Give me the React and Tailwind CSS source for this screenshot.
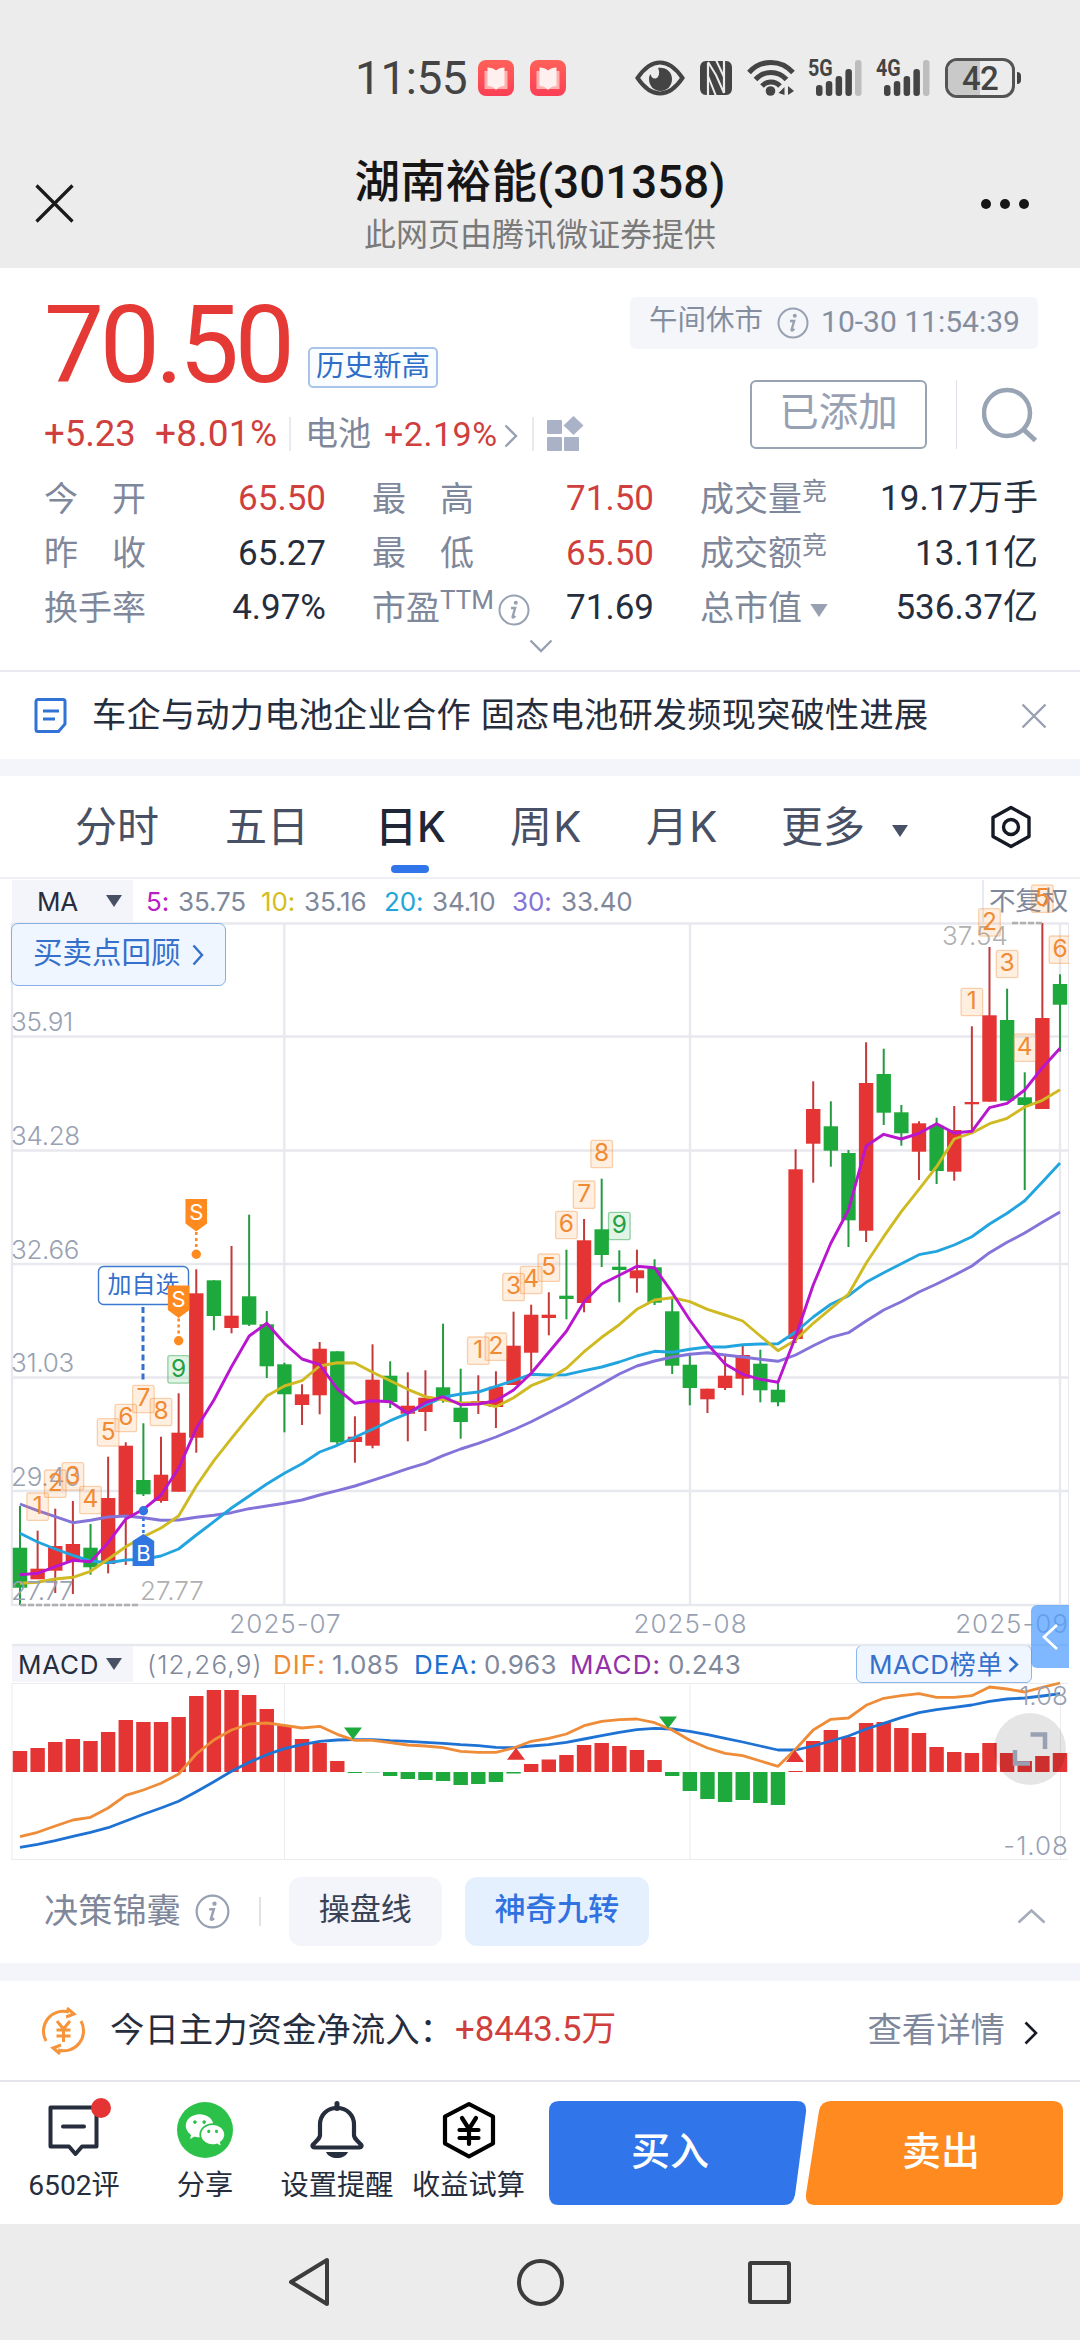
import React from 'react';
import { RiWechatFill } from 'react-icons/ri';

const RED = '#e53434';
const GREEN = '#1ea93c';

// trend, body top, body bottom, high, low
const candles = [
  ['g', 1547.7, 1587.7, 1506, 1605],
  ['r', 1568.7, 1579.3, 1530.7, 1579],
  ['r', 1546, 1570.7, 1508.7, 1593],
  ['r', 1544, 1561.7, 1501, 1594],
  ['g', 1547.7, 1567.3, 1524, 1574.7],
  ['r', 1498, 1564, 1456.7, 1573.3],
  ['r', 1445.7, 1515, 1442.3, 1565],
  ['g', 1480, 1494.3, 1423.3, 1496],
  ['r', 1474.7, 1501, 1436.7, 1502.7],
  ['r', 1432.7, 1491.7, 1393.3, 1491.7],
  ['r', 1293.3, 1437.7, 1269.3, 1452.7],
  ['g', 1280.3, 1316, 1280.3, 1330.3],
  ['r', 1315.7, 1328, 1246, 1333.3],
  ['g', 1296.3, 1324.7, 1214.7, 1326],
  ['g', 1324.3, 1366.3, 1311, 1378],
  ['g', 1364.3, 1394.3, 1362.7, 1432.3],
  ['r', 1394.3, 1405, 1384.3, 1425],
  ['r', 1348.7, 1395.3, 1342, 1414.3],
  ['g', 1351.3, 1442.3, 1351.3, 1445],
  ['r', 1436.7, 1442, 1416.3, 1462.7],
  ['r', 1379.7, 1445.7, 1344.3, 1448.3],
  ['g', 1375.7, 1402, 1361.3, 1408],
  ['r', 1405.7, 1413.7, 1372.3, 1441.3],
  ['r', 1397.7, 1412, 1370.3, 1431],
  ['g', 1387.3, 1400, 1323.7, 1402.7],
  ['g', 1407.7, 1422, 1368.7, 1438.7],
  ['r', 1401, 1404.7, 1375.3, 1414],
  ['r', 1386.7, 1407, 1371.3, 1428],
  ['r', 1345.7, 1385, 1311.7, 1385],
  ['r', 1314.7, 1352.7, 1304.7, 1371.7],
  ['r', 1314.7, 1318, 1292.3, 1335.3],
  ['g', 1295.7, 1299, 1249.7, 1319.3],
  ['r', 1240.3, 1303, 1219, 1312.3],
  ['g', 1229.3, 1255, 1178.7, 1267],
  ['g', 1266.7, 1270, 1250.3, 1302.3],
  ['r', 1270.3, 1278.3, 1249.7, 1292.7],
  ['g', 1267.3, 1302.7, 1259.3, 1305],
  ['g', 1311.3, 1365.7, 1296.7, 1374],
  ['g', 1364.7, 1388, 1355, 1405.3],
  ['r', 1388.7, 1399.3, 1388.7, 1413],
  ['r', 1375.7, 1388, 1355.7, 1390],
  ['r', 1355, 1378.7, 1345.3, 1395.3],
  ['g', 1363.7, 1390.3, 1349.7, 1402.3],
  ['g', 1389.7, 1402.3, 1382.7, 1406.3],
  ['r', 1169.3, 1339, 1149.3, 1343],
  ['r', 1109, 1143.7, 1081.3, 1182.7],
  ['g', 1126.3, 1150.7, 1101.3, 1166.7],
  ['g', 1153, 1220.3, 1150, 1247],
  ['r', 1083, 1230.7, 1042.3, 1242],
  ['g', 1074, 1112.7, 1048.7, 1125],
  ['g', 1112.3, 1133.3, 1105, 1145.7],
  ['r', 1123.3, 1151.7, 1121.3, 1180],
  ['g', 1125.7, 1171, 1117.7, 1184],
  ['r', 1130, 1171.7, 1106, 1180.7],
  ['r', 1102, 1104.3, 1026.3, 1132.3],
  ['r', 1015.3, 1101.7, 947, 1101.7],
  ['g', 1020, 1100.7, 988.7, 1100.7],
  ['g', 1097.3, 1105, 1072.3, 1190],
  ['r', 1018, 1109, 923, 1109],
  ['g', 984, 1004.7, 974.3, 1051.7],
];

const ma5 = [
  1574.7, 1573.3, 1566.7, 1560.3, 1561.7, 1542.7, 1519, 1509.3, 1495, 1468.3, 1428.3, 1400, 1366.7, 1336, 1323.3,
  1343.3, 1359, 1364.7, 1389, 1403.3, 1400.7, 1401.7, 1413.3, 1402.7, 1396.7, 1404.7, 1404, 1400.7, 1390, 1373.3,
  1352.3, 1331.3, 1301.7, 1284, 1275.3, 1266.3, 1267.7, 1292.7, 1320, 1344, 1364, 1374.3, 1379.3, 1382.3, 1336.7,
  1285, 1243.3, 1210, 1146, 1134.3, 1139, 1133.3, 1123.7, 1133, 1131.3, 1107.7, 1103.3, 1090, 1067.7, 1048.3,
];
const ma10 = [
  1583.3, 1582.3, 1579, 1577.3, 1571.3, 1559.3, 1546.7, 1536.7, 1528, 1516, 1486, 1460.7, 1438.3, 1416.7, 1396,
  1386, 1380.7, 1366, 1362.7, 1363, 1372.3, 1380.7, 1389.3, 1396.7, 1399.7, 1403, 1402.7, 1406.7, 1397.7, 1385.7,
  1378.7, 1368.3, 1351.7, 1337.3, 1324.7, 1309.3, 1300, 1297.7, 1301.7, 1309.3, 1315, 1321, 1336, 1350.7, 1340,
  1323.3, 1308.7, 1294, 1263.3, 1236.7, 1211.7, 1189.3, 1166.7, 1139, 1133, 1123.7, 1118.3, 1107, 1100.3, 1089.7,
];
const ma20 = [
  1533.3, 1542, 1549, 1555.3, 1561, 1562.7, 1560, 1559.3, 1556, 1549, 1535, 1521.7, 1508, 1496, 1484,
  1473.3, 1463.7, 1452, 1445.3, 1437.3, 1429.3, 1420.7, 1413.3, 1405, 1397.3, 1394, 1392, 1386.3, 1380.7, 1374.3,
  1375, 1374.7, 1370.7, 1367, 1362, 1356, 1351.3, 1352.3, 1349.3, 1347, 1347, 1344.7, 1344, 1343.7, 1332,
  1317, 1304.3, 1295.7, 1282.3, 1272.7, 1263.7, 1254.7, 1251.3, 1245, 1236.7, 1224, 1213.3, 1200.7, 1182, 1163,
];
const ma30 = [
  1504, 1510.7, 1516.7, 1522.7, 1520.3, 1517, 1516, 1517.7, 1520.3, 1520, 1517.3, 1515.3, 1512.7, 1508.7, 1506,
  1503.3, 1500, 1495, 1490.7, 1486, 1480.3, 1474.7, 1468.7, 1463.3, 1455.7, 1449, 1443.3, 1437, 1429.7, 1421.7,
  1412.7, 1403.7, 1393.7, 1384, 1374, 1366, 1361, 1357, 1354.3, 1352.7, 1355, 1357, 1359.3, 1361.3, 1355,
  1345.7, 1337.3, 1332.7, 1321, 1310, 1301.7, 1292, 1284, 1275.3, 1266, 1252.7, 1242.3, 1233, 1222.3, 1212,
];

// candle index, number, top
const turns = [
  [1, 1, 1493], [2, 2, 1470], [3, 3, 1462.7], [4, 4, 1486.3], [5, 5, 1418.7], [6, 6, 1404.3], [7, 7, 1385.3],
  [8, 8, 1398.3], [9, 9, 1355.7],
  [26, 1, 1337], [27, 2, 1333], [28, 3, 1273.3], [29, 4, 1266.3], [30, 5, 1254], [31, 6, 1211.3], [32, 7, 1181],
  [33, 8, 1140.3], [34, 9, 1212.3],
  [54, 1, 988.3], [55, 2, 908.7], [56, 3, 950.3], [57, 4, 1034], [58, 5, 885], [59, 6, 936],
];

const macdBars = [
  21, 24, 30, 33, 31, 40, 52, 50, 50, 55, 76, 82, 82, 77, 63, 46, 33, 29, 11, -1, -0.4, -4, -7, -8, -9, -13, -12, -10,
  -1.5, 8, 12.5, 17, 27, 29, 26, 22, 12, -4, -19, -27, -30, -28, -31, -33, 1, 31, 42, 35, 49, 50, 44, 39, 25, 20, 19,
  29, 19, 11, 16, 19,
];
const dif = [
  710, 697, 678, 660, 652, 624, 586, 570, 550, 522, 462, 420, 390, 372, 369, 376, 384, 379, 403, 421, 421, 428, 435,
  438, 443, 454, 457, 457, 444, 424, 415, 402, 377, 364, 359, 357, 368, 390, 421, 444, 460, 467, 483, 499, 448, 390,
  358, 354, 316, 295, 287, 281, 292, 292, 287, 261, 267, 276, 262, 249,
];
const dea = [
  742, 733, 722, 709, 697, 683, 663, 643, 624, 604, 575, 545, 514, 487, 464, 446, 434, 424, 420, 419, 419, 422, 424,
  427, 430, 434, 437, 442, 443, 438, 434, 427, 417, 407, 397, 389, 385, 387, 394, 404, 415, 426, 438, 450, 450, 438,
  423, 408, 387, 370, 353, 338, 329, 322, 315, 304, 297, 294, 288, 281,
];

const xAt = (i) => 20 + i * 17.627;
const points = (values) => values.map((v, i) => `${xAt(i).toFixed(1)},${v}`).join(' ');
const macdPoints = (values) => values.map((v, i) => `${xAt(i).toFixed(1)},${(1600 + v / 3).toFixed(1)}`).join(' ');

function InfoIcon({ size = 32 }) {
  return (
    <svg width={size} height={size} viewBox="0 0 32 32" fill="none" className="shrink-0">
      <circle cx="16" cy="16" r="14.5" stroke="#98a1b2" strokeWidth="2" />
      <circle cx="17.8" cy="8.8" r="2" fill="#98a1b2" />
      <path d="M13 14h4.2l-2.6 8.6c-.3 1.2.8 1.4 2.8-.6" stroke="#98a1b2" strokeWidth="2.3" />
    </svg>
  );
}

function Caret({ className, width = 16, height = 12 }) {
  return (
    <svg width={width} height={height} viewBox="0 0 16 12" className={className}>
      <path d="M0 0h16L8 12z" fill="currentColor" />
    </svg>
  );
}

function Chevron({ className, width = 12, height = 22, stroke = 2.4 }) {
  return (
    <svg width={width} height={height} viewBox={`0 0 ${width} ${height}`} fill="none" className={className}>
      <path
        d={`M1.5 1.5L${width - 2} ${height / 2}L1.5 ${height - 1.5}`}
        stroke="currentColor"
        strokeWidth={stroke}
      />
    </svg>
  );
}

function BookIcon() {
  return (
    <svg width="36" height="36" viewBox="0 0 36 36">
      <defs>
        <linearGradient id="book" x1="0" y1="0" x2="0" y2="1">
          <stop offset="0" stopColor="#ff6159" />
          <stop offset="1" stopColor="#fb3f55" />
        </linearGradient>
      </defs>
      <rect width="36" height="36" rx="8" fill="url(#book)" />
      <path d="M6.500 11h23v18h-23z" fill="#ffb0ad" />
      <path d="M9.500 7.500c3.500 0 6.500 1 8.500 3 2-2 5-3 8.500-3V26c-3.500 0-6.500 1.500-8.500 4-2-2.500-5-4-8.500-4z" fill="#fff0f0" />
    </svg>
  );
}

function Signal({ label }) {
  return (
    <div className="relative h-[38px] w-[54px]">
      <span className="absolute -top-px left-0 origin-left scale-x-[0.82] text-[24px] leading-[20px] font-bold">{label}</span>
      <svg width="46" height="38" viewBox="0 0 46 38" className="absolute top-0 left-2" fill="#444">
        <rect x="0" y="26" width="6.500" height="11" rx="3" />
        <rect x="9.800" y="22" width="6.500" height="15" rx="3" />
        <rect x="19.600" y="17" width="6.500" height="20" rx="3" />
        <rect x="29.400" y="10" width="6.500" height="27" rx="3" />
        <rect x="39" y="1" width="6.500" height="36" rx="3" fill="#bdbdbd" />
      </svg>
    </div>
  );
}

function StatusBar() {
  return (
    <div className="flex h-[156px] items-center pl-[355px] font-['Roboto'] text-[#444]">
      <span className="w-[123px] text-[46px] leading-none tracking-[-0.01em]">11:55</span>
      <BookIcon />
      <div className="w-4" />
      <BookIcon />
      <svg width="50" height="36" viewBox="0 0 50 36" className="ml-[69px]" fill="none">
        <path d="M2.500 18C10 7 17 2.500 25 2.500S40 7 47.500 18C40 29 33 33.500 25 33.500S10 29 2.500 18z" stroke="#444" strokeWidth="4" />
        <path d="M23 8c8-1 14 4 14 11s-5 12-11.500 12S14 26 14 19c0-2 .5-3.500 1.500-5 .5 3 2.500 5 5 4.500 4-1 4.500-7 2.500-10.500z" fill="#444" />
      </svg>
      <svg width="34" height="36" viewBox="0 0 34 36" className="ml-[14px]">
        <path d="M7 1h20c4 0 6 3 6 7v20c0 4-2 7-6 7H7c-4 0-6-3-6-7V8c0-4 2-7 6-7z" fill="#444" />
        <path d="M9 35V3M25 1v32" stroke="#ececec" strokeWidth="2.200" fill="none" />
        <path d="M9 2l8 13 8 18M9 16l8 20M17 0l8 17" stroke="#ececec" strokeWidth="2" fill="none" />
      </svg>
      <svg width="48" height="38" viewBox="0 0 48 38" className="ml-[14px]" fill="none" stroke="#444" strokeWidth="5">
        <path d="M2 13.500C14 0 34 0 46 13.500" />
        <path d="M8.500 20.500C17 11 31 11 39.500 20.500" />
        <path d="M15 27C20 21.500 28 21.500 33 27" />
        <circle cx="23.500" cy="32" r="4.800" fill="#444" stroke="none" />
        <path d="M31.500 34l6-6v8zM47 32l-6-5v9z" fill="#444" stroke="none" />
      </svg>
      <div className="ml-[13px]"><Signal label="5G" /></div>
      <div className="ml-[14px]"><Signal label="4G" /></div>
      <div className="relative ml-[15px] flex h-10 w-[70px] items-center justify-center overflow-hidden rounded-[12px] border-[3px] border-[#555]">
        <div className="absolute inset-y-0 left-0 w-1/2 bg-[#c9c9c9]" />
        <span className="relative text-[33px] leading-none font-medium tracking-[-0.02em]">42</span>
      </div>
      <div className="ml-[2px] h-3 w-1 rounded-r bg-[#444]" />
    </div>
  );
}

function TitleBar() {
  return (
    <div className="flex h-[112px] items-start justify-between px-[35px]">
      <div className="w-[80px]">
        <svg width="39" height="39" viewBox="0 0 39 39" className="mt-7" stroke="#1a1a1a" strokeWidth="3.200">
          <path d="M1.500 1.500l36 36M37.500 1.500l-36 36" />
        </svg>
      </div>
      <div className="text-center">
        <h1 className="mt-px font-['Roboto','Noto_Sans_CJK_SC',sans-serif] text-[45.500px] leading-[52px] font-medium tracking-[0.004em] text-[#161616]">湖南裕能(301358)</h1>
        <p className="mt-[4px] text-[32px] leading-[44px] text-[#7a7a7a]">此网页由腾讯微证券提供</p>
      </div>
      <div className="flex w-[80px] justify-end pr-[15px]">
        <svg width="50" height="12" viewBox="0 0 50 12" className="mt-[42px]" fill="#161616">
          <circle cx="6" cy="6" r="5" />
          <circle cx="25" cy="6" r="5" />
          <circle cx="44" cy="6" r="5" />
        </svg>
      </div>
    </div>
  );
}

function Metric({ label, spread, extra, value, up }) {
  return (
    <div className="flex h-[54.500px] items-center justify-between">
      <div className="flex items-center text-[34px] text-[#7f889b]">
        {spread ? (
          <span className="flex w-[102px] justify-between">
            <span>{label[0]}</span>
            <span>{label[1]}</span>
          </span>
        ) : (
          <span>{label}</span>
        )}
        {extra}
      </div>
      <span className={up ? 'text-[35px] text-[#cf3f3d]' : 'text-[35px] text-[#262d3d]'}>{value}</span>
    </div>
  );
}

function Quote() {
  const jing = <span className="-mt-4 text-[25px]">竞</span>;
  return (
    <section className="h-[402px] bg-white pt-[29px] pr-[42px] pl-[44px] font-['Roboto','Noto_Sans_CJK_SC',sans-serif]">
      <div className="flex h-[158px] justify-between">
        <div>
          <div className="flex h-[98px] items-end">
            <span className="w-[264px] text-[107px] leading-[98px] tracking-[-0.042em] text-[#e53935]">70.50</span>
            <span className="mb-[7px] flex h-[41px] w-[130px] items-center justify-center rounded-[5px] border-2 border-[#a9c4e8] bg-[#fafdff] text-[28.500px] text-[#2f6fc9]">
              历史新高
            </span>
          </div>
          <div className="mt-[17px] flex h-[44px] items-center whitespace-nowrap">
            <span className="w-[111px] text-[36.500px] text-[#cf3f3d]">+5.23</span>
            <span className="w-[134px] text-[37px] tracking-[0.01em] text-[#cf3f3d]">+8.01%</span>
            <span className="mr-[14px] h-[34px] w-[2px] bg-[#e8eaf0]" />
            <span className="w-[79px] text-[33px] text-[#7f889b]">电池</span>
            <span className="w-[120px] text-[34px] tracking-[0.015em] text-[#cf3f3d]">+2.19%</span>
            <Chevron className="mt-1 text-[#98a1b2]" width={14} height={24} />
            <span className="mr-[13px] ml-[14px] h-[34px] w-[2px] bg-[#e8eaf0]" />
            <svg width="38" height="36" viewBox="0 0 38 36" fill="#a9b2c6">
              <rect x="0" y="4" width="15" height="14" rx="1" />
              <path d="M26.500 0l10 9.500-10 9.500-10-9.500z" />
              <rect x="0" y="21" width="15" height="14" rx="1" />
              <rect x="17" y="21" width="15" height="14" rx="1" />
            </svg>
          </div>
        </div>
        <div className="flex flex-col items-end">
          <div className="flex h-[52px] w-[408px] items-center rounded-[6px] bg-[#f4f6fa] pl-[19px] text-[30px] text-[#858e9f]">
            <span className="mr-[14px] -mt-[3px] text-[28.500px]">午间休市</span>
            <InfoIcon />
            <span className="-mt-[3px] ml-[12px]">10-30 11:54:39</span>
          </div>
          <div className="mt-[31px] flex h-[69px] items-center">
            <div className="flex h-[69px] w-[177px] items-center justify-center rounded-[6px] border-2 border-[#98a3b4] pb-1 text-[39.500px] text-[#98a1b2]">
              已添加
            </div>
            <div className="ml-[29px] h-[69px] w-px bg-[#dfe2e9]" />
            <svg width="56" height="56" viewBox="0 0 56 56" className="ml-[25px]" fill="none" stroke="#98a3b4" strokeWidth="4.500">
              <circle cx="25" cy="26" r="23" />
              <path d="M41 42l12.500 11.500" strokeWidth="5" />
            </svg>
          </div>
        </div>
      </div>
      <div className="mt-[17px] grid grid-cols-[282px_282px_338px] gap-x-[46px]">
        <Metric label="今开" spread value="65.50" up />
        <Metric label="最高" spread value="71.50" up />
        <Metric label="成交量" extra={jing} value="19.17万手" />
        <Metric label="昨收" spread value="65.27" />
        <Metric label="最低" spread value="65.50" up />
        <Metric label="成交额" extra={jing} value="13.11亿" />
        <Metric label="换手率" value="4.97%" />
        <Metric
          label="市盈"
          value="71.69"
          extra={
            <>
              <span className="-mt-4 mr-1 text-[26px]">TTM</span>
              <div className="pt-1"><InfoIcon /></div>
            </>
          }
        />
        <Metric label="总市值" value="536.37亿" extra={<Caret width={18} height={13} className="mt-1 ml-2 text-[#98a1b2]" />} />
      </div>
      <svg width="24" height="14" viewBox="0 0 24 14" className="mx-auto mt-[3px]" fill="none" stroke="#98a1b2" strokeWidth="2.400">
        <path d="M1.500 1.500L12 12L22.500 1.500" />
      </svg>
    </section>
  );
}

function News() {
  return (
    <div className="flex h-[89px] items-center border-t-2 border-[#e8e9f1] bg-white pr-[33px] pl-[34px]">
      <svg width="33" height="35" viewBox="0 0 33 35" fill="none" stroke="#3072d6" strokeWidth="3">
        <path d="M4 1.500h25a2 2 0 0 1 2 2V26l-6.500 7.500H4a2 2 0 0 1-2-2v-28a2 2 0 0 1 2-2z" />
        <path d="M9 13h16M9 21h12" />
      </svg>
      <span className="-mt-[2px] ml-[25px] text-[34.200px] tracking-[0.25px] text-[#262d3d]">车企与动力电池企业合作 固态电池研发频现突破性进展</span>
      <svg width="26" height="26" viewBox="0 0 26 26" className="ml-auto" stroke="#98a1b2" strokeWidth="2.400">
        <path d="M1.500 1.500l23 23M24.500 1.500l-23 23" />
      </svg>
    </div>
  );
}

function Tabs() {
  return (
    <div className="flex h-[103px] items-center border-b-2 border-[#eff0f4] bg-white pl-[75px] text-[42px] text-[#475064]">
      <span className="w-[150px]">分时</span>
      <span className="w-[150px]">五日</span>
      <span className="relative flex w-[135px] font-medium text-[#1f2636]">
        日K
        <span className="absolute top-[70px] left-[16px] h-[8px] w-[38px] rounded-full bg-[#3076ea]" />
      </span>
      <span className="w-[136px] tracking-[0.03em]">周K</span>
      <span className="w-[135px] tracking-[0.03em]">月K</span>
      <span className="w-[109px]">更多</span>
      <Caret className="mt-2" width={20} height={12} />
      <svg width="42" height="44" viewBox="0 0 42 44" className="ml-[80px]" fill="none" stroke="#151a24" strokeWidth="3.400">
        <path d="M21 2.500l18 10v19l-18 10-18-10v-19z" strokeLinejoin="round" />
        <circle cx="21" cy="22" r="7.500" />
      </svg>
    </div>
  );
}

function MaRow() {
  return (
    <div className="relative flex h-[42px] items-center bg-white pl-[12px] text-[26px] tracking-[-0.005em] whitespace-nowrap text-[#7f889b]">
      <div className="flex h-[42px] w-[121px] items-center bg-[#f4f5fa] pl-[25px] text-[#262d3d]">
        MA
        <Caret className="ml-auto mr-[11px] text-[#475064]" />
      </div>
      <span className="ml-[13px] w-[32px] text-[#b81ec4]">5:</span>
      <span className="w-[83px]">35.75</span>
      <span className="w-[43px] text-[#d4bd1e]">10:</span>
      <span className="w-[80px]">35.16</span>
      <span className="w-[48px] text-[#22a5d8]">20:</span>
      <span className="w-[80px]">34.10</span>
      <span className="w-[49px] text-[#8473d8]">30:</span>
      <span>33.40</span>
      <div className="ml-auto flex h-full w-[98px] items-center border-l-2 border-[#e8e9f1] pl-[5px] text-[26.500px]">
        不复权
      </div>
    </div>
  );
}

function SellFlag({ index, top }) {
  const x = xAt(index);
  return (
    <g>
      <path d={`M${x - 10.8} ${top}h21.600v24.500l-10.800 8-10.800-8z`} fill="#ff8a1f" />
      <text x={x} y={top + 21} textAnchor="middle" fontSize="22" fontWeight="400" fill="#fff">S</text>
      <line x1={x} x2={x} y1={top + 33} y2={top + 51} stroke="#ff8a1f" strokeWidth="2.600" strokeDasharray="3 3" />
      <circle cx={x} cy={top + 55.3} r="4.700" fill="#ff8a1f" />
    </g>
  );
}

function KLineChart() {
  return (
    <svg
      width="1080"
      height="723"
      viewBox="0 922 1080 723"
      className="relative block overflow-visible font-['Inter','Noto_Sans_CJK_SC',sans-serif]"
      fontSize="26"
      fontWeight="300"
    >
      <g stroke="#e8e9ee" strokeWidth="2.400">
        {[923.5, 1036.5, 1150.5, 1264, 1377.5, 1491, 1605].map((y) => (
          <line key={y} x1="12" x2="1068" y1={y} y2={y} />
        ))}
        {[12, 284.3, 690, 1060].map((x) => (
          <line key={x} x1={x} x2={x} y1="923" y2="1606" />
        ))}
        <line x1="1068.500" x2="1068.500" y1="923" y2="1606" strokeWidth="1" />
        <line x1="12" x2="1068" y1="1645" y2="1645" />
      </g>

      {candles.map(([trend, top, bottom, high, low], i) => {
        const color = trend === 'r' ? RED : GREEN;
        return (
          <g key={i} fill={color}>
            <rect x={xAt(i) - 1} y={high} width="2" height={low - high} fill={trend === 'r' ? '#c23a3a' : '#259a41'} />
            <rect x={xAt(i) - 7.2} y={top} width="14.400" height={bottom - top} />
          </g>
        );
      })}

      <g fill="none" strokeWidth="2.900" strokeLinejoin="round">
        <polyline points={points(ma30)} stroke="#8473d8" />
        <polyline points={points(ma20)} stroke="#22a5df" />
        <polyline points={points(ma10)} stroke="#cfba22" />
        <polyline points={points(ma5)} stroke="#b916cf" />
      </g>

      <g stroke="#b0b0b0" strokeWidth="2.400" strokeDasharray="6 2">
        <line x1="20" x2="140" y1="1605" y2="1605" />
        <line x1="1012" x2="1043" y1="923" y2="923" />
      </g>

      <g fill="#98a1b2">
        <g letterSpacing="-0.300">
          <text x="11" y="1031">35.91</text>
          <text x="11" y="1145">34.28</text>
          <text x="11" y="1258.500">32.66</text>
          <text x="11" y="1371.500">31.03</text>
          <text x="11" y="1485.500">29.40</text>
          <text x="11" y="1599.500">27.77</text>
        </g>
        <g letterSpacing="1">
          <text x="285.500" y="1632.500" textAnchor="middle">2025-07</text>
          <text x="690.500" y="1632.500" textAnchor="middle">2025-08</text>
          <text x="1069" y="1632.500" textAnchor="end">2025-09</text>
        </g>
      </g>
      <g fill="#b0b0b0">
        <text x="140" y="1599.500">27.77</text>
        <text x="942" y="945">37.54</text>
      </g>

      <clipPath id="plot">
        <rect x="12" y="880" width="1057" height="726" />
      </clipPath>
      <g clipPath="url(#plot)" fontWeight="500" fontSize="24.500" textAnchor="middle">
        {turns.map(([i, n, top]) => (
          <g key={i}>
            <rect
              x={xAt(i) - 10.8}
              y={top}
              width="21.600"
              height="27.400"
              rx="2"
              fill={n === 9 ? '#22b04422' : '#ff8a1f22'}
              stroke={n === 9 ? '#22a04477' : '#f0934466'}
              strokeWidth="1.300"
            />
            <text x={xAt(i)} y={top + 21} fontWeight="400" fill={n === 9 ? '#22a044' : '#f08a33'}>{n}</text>
          </g>
        ))}
      </g>

      <rect x="98.500" y="1266.500" width="90" height="38" rx="5" fill="#ffffffcc" stroke="#3b78d0" strokeWidth="1.400" />
      <text x="143.500" y="1293" textAnchor="middle" fontSize="24" fontWeight="400" fill="#3470cc">加自选</text>
      <line x1="143" x2="143" y1="1307" y2="1380" stroke="#3470cc" strokeWidth="3" strokeDasharray="6 3.500" />
      <SellFlag index={10} top={1199} />
      <SellFlag index={9} top={1285.5} />
      <circle cx="143.400" cy="1510.700" r="4.700" fill="#3076e0" />
      <line x1="143.400" x2="143.400" y1="1518" y2="1534" stroke="#3076e0" strokeWidth="2.600" strokeDasharray="3 3" />
      <path d="M143.400 1534l10.800 7v25h-21.600v-25z" fill="#3076e0" />
      <text x="143.400" y="1561" textAnchor="middle" fontSize="22" fontWeight="400" fill="#fff">B</text>
    </svg>
  );
}

function MacdRow() {
  return (
    <div className="flex h-[38px] items-center bg-white pl-[12px] text-[26px] tracking-[0.012em] whitespace-nowrap text-[#7f889b]">
      <div className="flex h-[36px] w-[121px] items-center bg-[#f4f5fa] pl-[6px] tracking-[0.03em] text-[#262d3d]">
        MACD
        <Caret className="ml-auto mr-[11px] text-[#475064]" />
      </div>
      <span className="ml-[14px] w-[126px] font-light tracking-[0.045em]">(12,26,9)</span>
      <span className="w-[59px] tracking-[0.04em] text-[#ee8a33]">DIF:</span>
      <span className="w-[82px]">1.085</span>
      <span className="w-[70px] tracking-[0.04em] text-[#1a6fd0]">DEA:</span>
      <span className="w-[86px]">0.963</span>
      <span className="w-[98px] tracking-[0.04em] text-[#9232a8]">MACD:</span>
      <span>0.243</span>
      <div className="mr-[48px] ml-auto flex h-[38px] w-[176px] items-center justify-center rounded-[6px] border border-[#8db6ea] bg-[#eff6ff] tracking-[0.025em] text-[#3470cc]">
        MACD榜单
        <Chevron className="ml-[5px]" width={11} height={17} />
      </div>
    </div>
  );
}

function MacdChart() {
  return (
    <svg
      width="1080"
      height="177"
      viewBox="0 1683 1080 177"
      className="block overflow-visible font-['Inter',sans-serif]"
      fontSize="26"
      fontWeight="300"
    >
      <path
        d="M12 1683.500H1068M12 1859.500H1068M12 1683V1860M284.500 1683V1860M690 1683V1860M1060.500 1683V1860"
        stroke="#ebecef"
        fill="none"
      />
      {macdBars.map((v, i) => (
        <rect
          key={i}
          x={xAt(i) - 7.2}
          y={v > 0 ? 1772 - v : 1772}
          width="14.400"
          height={Math.abs(v)}
          fill={v > 0 ? RED : GREEN}
        />
      ))}
      <g fill="none" strokeWidth="2.800" strokeLinejoin="round">
        <polyline points={macdPoints(dea)} stroke="#1d72d3" />
        <polyline points={macdPoints(dif)} stroke="#ee8c38" />
      </g>
      <path d="M344 1727.500h18l-9 12zM659 1716.500h18l-9 12z" fill={GREEN} />
      <path d="M507 1759.700h18l-9-12zM786 1762h18l-9-12z" fill={RED} />
      <g fill="#98a1b2" textAnchor="end">
        <text x="1068" y="1705">1.08</text>
        <text x="1069" y="1855" letterSpacing="1">-1.08</text>
      </g>
    </svg>
  );
}

function ChartPanel() {
  return (
    <section className="relative bg-white font-['Inter','Noto_Sans_CJK_SC',sans-serif]">
      <MaRow />
      <KLineChart />
      <MacdRow />
      <MacdChart />
      <button className="absolute top-[43px] left-[11px] flex h-[63px] w-[215px] items-center rounded-[7px] border border-[#86aee4] bg-[#eff6ff] pb-1 pl-[21px] text-[29.500px] text-[#3470cc]">
        买卖点回顾
        <Chevron className="mt-1 ml-[11px]" width={12} height={22} />
      </button>
      <div className="absolute top-[725px] left-[1031px] flex h-[63px] w-[38px] items-center justify-center rounded-l-[6px] bg-[#4d9dffb8]">
        <svg width="16" height="26" viewBox="0 0 16 26" fill="none" stroke="#fff" strokeWidth="2.800">
          <path d="M15 1L2 13l13 12" />
        </svg>
      </div>
      <div className="absolute top-[833px] left-[994px] flex size-[72px] items-center justify-center rounded-full bg-black/10">
        <svg width="36" height="36" viewBox="0 0 36 36" fill="none" stroke="#98a1b2" strokeWidth="4.500">
          <path d="M18.500 3.500h14.500v14.500M3 19v13.500h15" />
        </svg>
      </div>
    </section>
  );
}

function Tools() {
  return (
    <div className="flex h-[103px] items-center bg-white pr-[34px] pl-[44px]">
      <span className="-mt-[2px] text-[34.200px] text-[#7f889b]">决策锦囊</span>
      <div className="ml-[14px]"><InfoIcon size={35} /></div>
      <div className="ml-[29px] h-[29px] w-[2px] bg-[#e0e2e8]" />
      <div className="ml-[28px] flex h-[69px] w-[153px] items-center justify-center rounded-[12px] bg-[#f4f5fa] pb-1 text-[31px] text-[#3a4256]">
        操盘线
      </div>
      <div className="ml-[23px] flex h-[69px] w-[184px] items-center justify-center rounded-[12px] bg-[#e5f0ff] pb-1 text-[31.200px] font-medium text-[#2f72e0]">
        神奇九转
      </div>
      <svg width="29" height="16" viewBox="0 0 29 16" className="mt-2 ml-auto" fill="none" stroke="#a5acba" strokeWidth="2.600">
        <path d="M1.500 14.500l13-12 13 12" />
      </svg>
    </div>
  );
}

function FundFlow() {
  return (
    <div className="flex h-[99px] items-center bg-white pr-[42px] pl-[41px] text-[34.400px]">
      <svg width="45" height="48" viewBox="0 0 45 48" fill="none" stroke="#f5943a" strokeWidth="3">
        <path d="M5 34A20 20 0 0 1 28 5M40 14A20 20 0 0 1 17 43" />
        <path d="M26 1l7 6-8 3M19 47l-7-6 8-3" />
        <path d="M16 14l6.500 8 6.500-8M22.500 22v13M15.500 23h14M15.500 29h14" />
      </svg>
      <span className="-mt-[2px] ml-[24px] text-[#262d3d]">今日主力资金净流入：</span>
      <span className="-mt-[2px] ml-px font-['Roboto','Noto_Sans_CJK_SC',sans-serif] text-[34.800px] text-[#cf3f3d]">+8443.5万</span>
      <span className="-mt-[2px] ml-auto text-[#7f889b]">查看详情</span>
      <Chevron className="mt-1 ml-[19px] text-[#151a24]" width={14} height={24} stroke={2.6} />
    </div>
  );
}

function Action({ icon, label, className }) {
  return (
    <div className={`flex flex-col items-center ${className}`}>
      <div className="flex h-[56px] items-center">{icon}</div>
      <span className="mt-[5px] text-[28.200px] leading-[46px] whitespace-nowrap text-[#262d3d]">{label}</span>
    </div>
  );
}

function BottomBar() {
  return (
    <div className="flex h-[144px] border-t-2 border-[#e5e6ec] bg-white pt-[20px] pl-[9px] font-['Roboto','Noto_Sans_CJK_SC',sans-serif]">
      <Action
        className="w-[130px]"
        label="6502评"
        icon={
          <svg width="64" height="60" viewBox="0 0 64 60" className="-mt-[3px] overflow-visible" fill="none">
            <path d="M8.500 8.500h46v39H40l-6.500 7.500-6.500-7.500H8.500z" stroke="#262d3d" strokeWidth="4" strokeLinejoin="round" />
            <path d="M21 27.500h21" stroke="#262d3d" strokeWidth="4" strokeLinecap="round" />
            <circle cx="59" cy="9" r="10" fill="#e53434" />
          </svg>
        }
      />
      <Action
        className="w-[132px]"
        label="分享"
        icon={
          <div className="flex size-[56px] items-center justify-center rounded-full bg-[#2cc24a]">
            <RiWechatFill className="size-[42px] text-white" />
          </div>
        }
      />
      <Action
        className="w-[132px]"
        label="设置提醒"
        icon={
          <svg width="54" height="58" viewBox="0 0 54 58" fill="none" stroke="#262d3d" strokeWidth="4.200">
            <path d="M27 7c-10 0-17 7-17 16.500V34c0 3-1.500 4-7 9.500-1 1-.5 3 1.500 3h45c2 0 2.500-2 1.500-3-5.500-5.500-7-6.500-7-9.500V23.500C44 14 37 7 27 7z" />
            <path d="M27 2.500v5" strokeWidth="5" strokeLinecap="round" />
            <path d="M16 51h22c-2 4-6 6-11 6s-9-2-11-6z" fill="#262d3d" stroke="none" />
          </svg>
        }
      />
      <Action
        className="w-[131px]"
        label="收益试算"
        icon={
          <svg width="54" height="58" viewBox="0 0 54 58" fill="none" stroke="#000" strokeWidth="4.200">
            <path d="M27 3l24 12.500v27L27 55.500 3 42.500v-27z" strokeLinejoin="round" />
            <path d="M20 17l7 11 7-11M27 28v15M17.500 29h19M17.500 37h19" strokeLinecap="round" />
          </svg>
        }
      />
      <div className="relative -mt-px ml-[15px] flex h-[104px] w-[258px] items-center justify-center">
        <svg width="258" height="104" viewBox="0 0 258 104" className="absolute inset-0">
          <path d="M10 0H248q10 0 9 11L246 94q-2 10-11 10H10Q0 104 0 94V10Q0 0 10 0z" fill="#3076ea" />
        </svg>
        <span className="relative mr-[16px] mb-[2px] text-[39px] font-medium text-white">买入</span>
      </div>
      <div className="relative -mt-px -ml-[2px] flex h-[104px] w-[258px] items-center justify-center">
        <svg width="258" height="104" viewBox="0 0 258 104" className="absolute inset-0">
          <path d="M26 0H248q10 0 10 10V94q0 10-10 10H9Q0 104 1 93L14 10Q16 0 26 0z" fill="#ff8a1f" />
        </svg>
        <span className="relative ml-[14px] mb-[2px] text-[39px] font-medium text-white">卖出</span>
      </div>
    </div>
  );
}

function SystemNav() {
  return (
    <div className="flex h-[116px] items-center bg-[#ececec] pl-[287px]">
      <svg width="45" height="50" viewBox="0 0 45 50" fill="none" stroke="#3c3c3c" strokeWidth="4" strokeLinejoin="round">
        <path d="M40 3v44L4 25z" />
      </svg>
      <div className="ml-[185px] size-[47px] rounded-full border-4 border-[#3c3c3c]" />
      <div className="ml-[184px] size-[43px] rounded-[3px] border-4 border-[#3c3c3c]" />
    </div>
  );
}

export default function App() {
  return (
    <div className="h-[2340px] w-[1080px] overflow-hidden bg-[#f4f5fa] font-['Inter','Noto_Sans_CJK_SC',sans-serif]">
      <header className="h-[268px] bg-[#ececec]">
        <StatusBar />
        <TitleBar />
      </header>
      <Quote />
      <News />
      <div className="h-[17px]" />
      <Tabs />
      <div className="h-px bg-white" />
      <ChartPanel />
      <Tools />
      <div className="h-[18px]" />
      <FundFlow />
      <BottomBar />
      <SystemNav />
    </div>
  );
}
